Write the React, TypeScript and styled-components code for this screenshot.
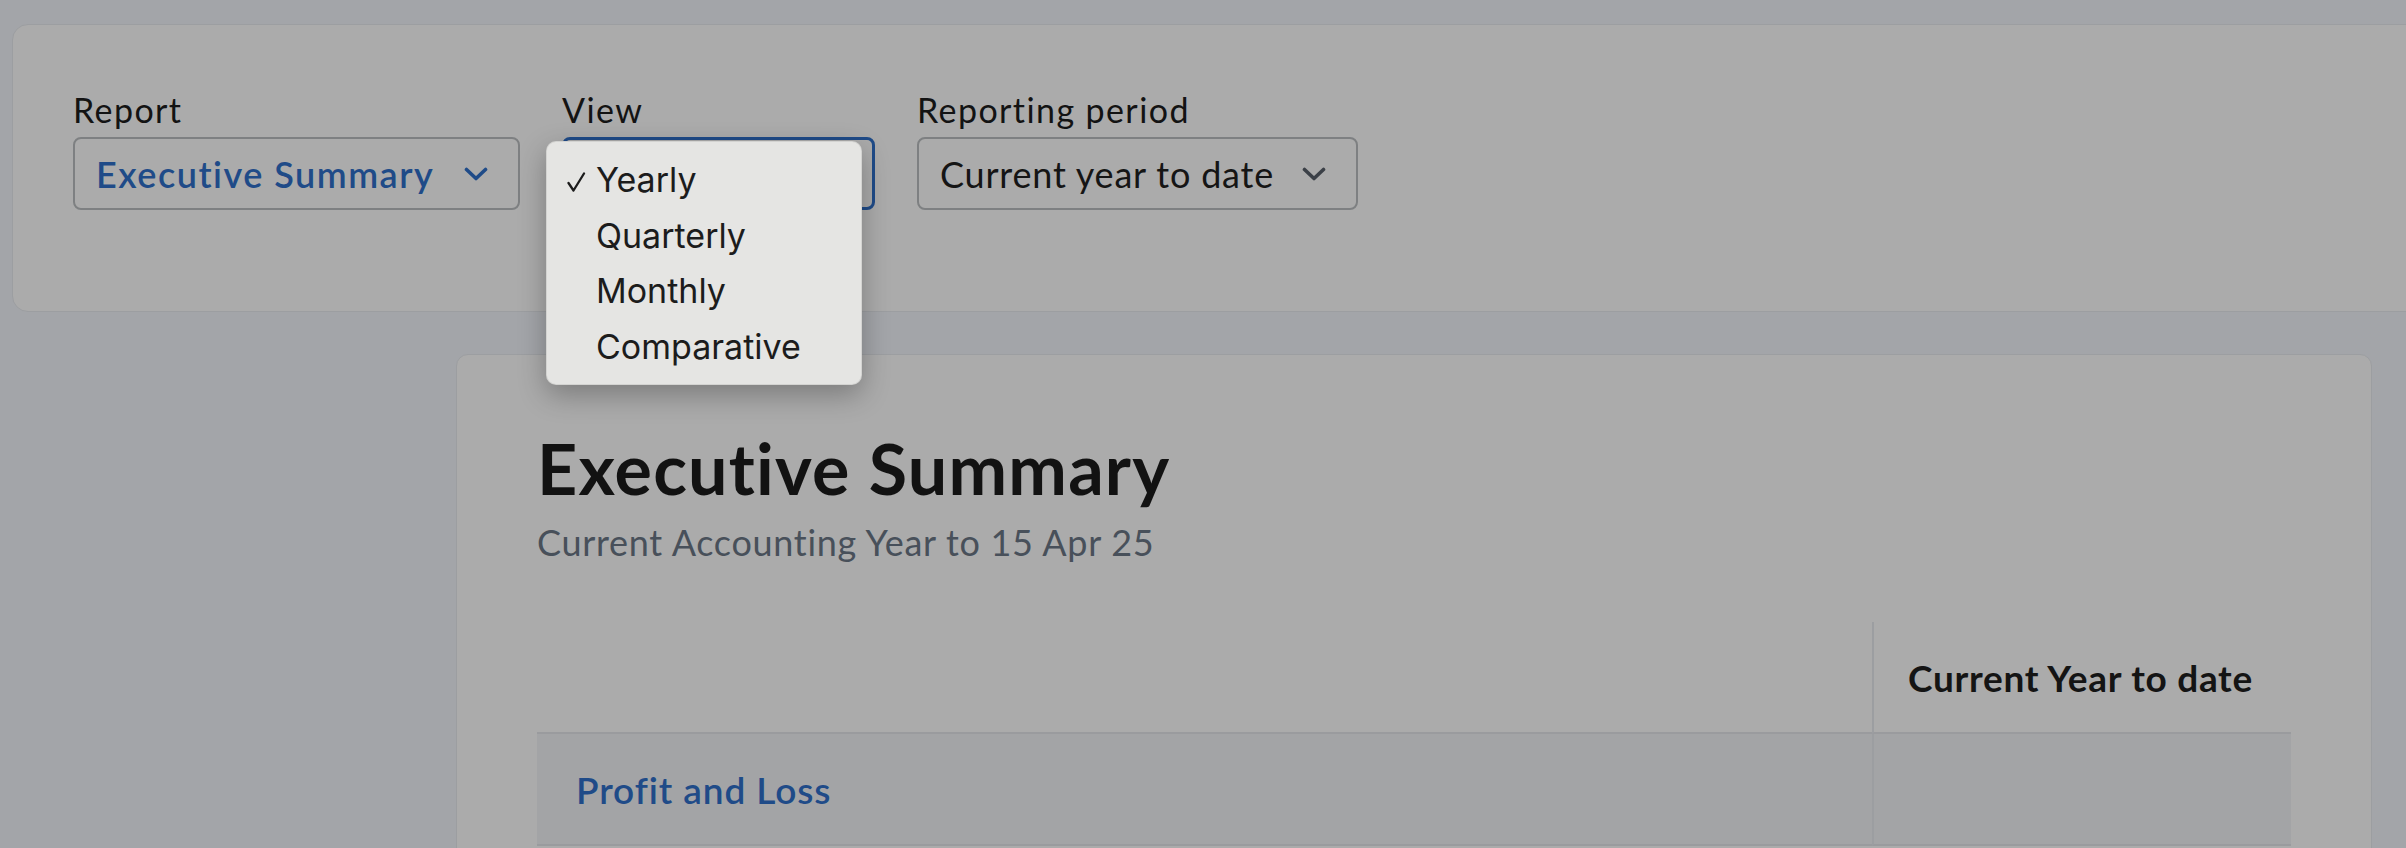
import { type FC } from 'react';
import styled, { createGlobalStyle } from 'styled-components';

const PAGE_BG = `#a3a5a9`;
const SURFACE = `#ababab`;
const EDGE = `#9c9ea1`;
const INK = `#131313`;
const BRAND_BLUE = `#1f4b88`;

const GlobalStyle = createGlobalStyle`
  html, body {
    margin: 0;
    padding: 0;
    background: ${PAGE_BG};
    overflow: hidden;
  }
  body {
    font-family: Lato, "Noto Sans", sans-serif;
    color: ${INK};
  }
`;

const Page = styled.div`
  display: flex;
  flex-direction: column;
  align-items: flex-start;
  width: 2406px;
  height: 848px;
  overflow: hidden;
`;

const FilterBar = styled.div`
  display: flex;
  flex-direction: row;
  align-items: flex-start;
  flex-shrink: 0;
  gap: 42px;
  box-sizing: border-box;
  width: 2440px;
  height: 288px;
  margin: 24px 0 0 12px;
  padding: 64px 0 0 60px;
  background: ${SURFACE};
  border: 1px solid ${EDGE};
  border-radius: 16px;
`;

const Field = styled.div`
  position: relative;
  display: flex;
  flex-direction: column;
`;

const FieldLabel = styled.label`
  font-size: 34px;
  line-height: 41px;
  letter-spacing: 1.4px;
  margin-bottom: 7px;
  color: ${INK};
`;

const SelectBox = styled.div<{ $width: number; $focused?: boolean }>`
  display: flex;
  flex-direction: row;
  align-items: center;
  justify-content: space-between;
  box-sizing: border-box;
  width: ${(p) => p.$width}px;
  height: 73px;
  padding: 0 30px 0 21px;
  border: ${(p) => (p.$focused ? `3px solid ${BRAND_BLUE}` : '2px solid #7e8082')};
  border-radius: 8px;
`;

const SelectValue = styled.span<{ $accent?: boolean }>`
  font-size: 36px;
  font-weight: ${(p) => (p.$accent ? 600 : 400)};
  letter-spacing: ${(p) => (p.$accent ? 1.5 : 0.8)}px;
  color: ${(p) => (p.$accent ? BRAND_BLUE : '#151515')};
  white-space: nowrap;
`;

const Chevron: FC<{ color: string }> = ({ color }) => (
  <svg width="24" height="14" viewBox="0 0 24 14" fill="none">
    <polyline points="2.5,2.5 12,11.5 21.5,2.5" stroke={color} strokeWidth="3.6" strokeLinecap="round" strokeLinejoin="round" />
  </svg>
);

// native popup list, drawn open over the View select
const Menu = styled.ul`
  position: absolute;
  left: -16px;
  top: 52px;
  z-index: 10;
  box-sizing: border-box;
  width: 316px;
  margin: 0;
  padding: 10px 0;
  list-style: none;
  background: #e5e5e3;
  border: 1px solid rgba(0, 0, 0, 0.08);
  border-radius: 10px;
  box-shadow: 0 10px 28px rgba(0, 0, 0, 0.28);
  font-family: Inter, "Liberation Sans", sans-serif;
`;

const MenuItem = styled.li`
  position: relative;
  height: 55.5px;
  padding-left: 49px;
  font-size: 34px;
  line-height: 55.5px;
  color: #1c1c1c;
  white-space: nowrap;
`;

const Check = styled.svg`
  position: absolute;
  left: 20px;
  top: 20px;
`;

const Card = styled.section`
  flex-shrink: 0;
  box-sizing: border-box;
  width: 1916px;
  min-height: 600px;
  margin: 42px 0 0 456px;
  padding: 71px 80px 0 80px;
  background: ${SURFACE};
  border: 1px solid ${EDGE};
  border-radius: 12px;
`;

const Title = styled.h1`
  margin: 0;
  font-size: 70px;
  line-height: 84px;
  font-weight: 700;
  letter-spacing: 1.2px;
  color: #121212;
`;

const Subtitle = styled.p`
  margin: 11px 0 0 0;
  font-size: 36px;
  line-height: 43px;
  letter-spacing: 0.7px;
  color: #48505a;
`;

const Table = styled.div`
  display: grid;
  grid-template-columns: 1fr 419px;
  margin-top: 58px;
`;

const Cell = styled.div<{ $shaded?: boolean; $divider?: boolean; $pad: number }>`
  display: flex;
  align-items: center;
  height: 110px;
  padding-left: ${(p) => p.$pad}px;
  background: ${(p) => (p.$shaded ? '#a3a4a6' : 'transparent')};
  border-bottom: 2px solid #9a9b9e;
  border-left: ${(p) => (p.$divider ? '2px solid #9c9ea1' : 'none')};
`;

const ColumnHeading = styled.span`
  font-size: 37px;
  font-weight: 700;
  letter-spacing: 0.7px;
  color: #141414;
`;

const SectionLink = styled.span`
  font-size: 37px;
  font-weight: 600;
  letter-spacing: 0.9px;
  color: ${BRAND_BLUE};
`;

const viewOptions = ['Yearly', 'Quarterly', 'Monthly', 'Comparative'];

export default function App() {
  const selected = 'Yearly';
  return (
    <Page>
      <GlobalStyle />
      <FilterBar>
        <Field>
          <FieldLabel>Report</FieldLabel>
          <SelectBox $width={447}>
            <SelectValue $accent>Executive Summary</SelectValue>
            <Chevron color={BRAND_BLUE} />
          </SelectBox>
        </Field>
        <Field>
          <FieldLabel>View</FieldLabel>
          <SelectBox $width={313} $focused>
            <span />
            <Chevron color="#3b4047" />
          </SelectBox>
          <Menu>
            {viewOptions.map((opt) => (
              <MenuItem key={opt}>
                {opt === selected && (
                  <Check width="19" height="20" viewBox="0 0 19 20" fill="none">
                    <polyline points="1.5,11 6.5,18.5 17,1.5" stroke="#1c1c1c" strokeWidth="2.3" strokeLinecap="round" strokeLinejoin="round" />
                  </Check>
                )}
                {opt}
              </MenuItem>
            ))}
          </Menu>
        </Field>
        <Field>
          <FieldLabel>Reporting period</FieldLabel>
          <SelectBox $width={441}>
            <SelectValue>Current year to date</SelectValue>
            <Chevron color="#3b4047" />
          </SelectBox>
        </Field>
      </FilterBar>
      <Card>
        <Title>Executive Summary</Title>
        <Subtitle>Current Accounting Year to 15 Apr 25</Subtitle>
        <Table>
          <Cell $pad={0} />
          <Cell $pad={34} $divider>
            <ColumnHeading>Current Year to date</ColumnHeading>
          </Cell>
          <Cell $pad={39} $shaded>
            <SectionLink>Profit and Loss</SectionLink>
          </Cell>
          <Cell $pad={0} $shaded $divider />
        </Table>
      </Card>
    </Page>
  );
}
